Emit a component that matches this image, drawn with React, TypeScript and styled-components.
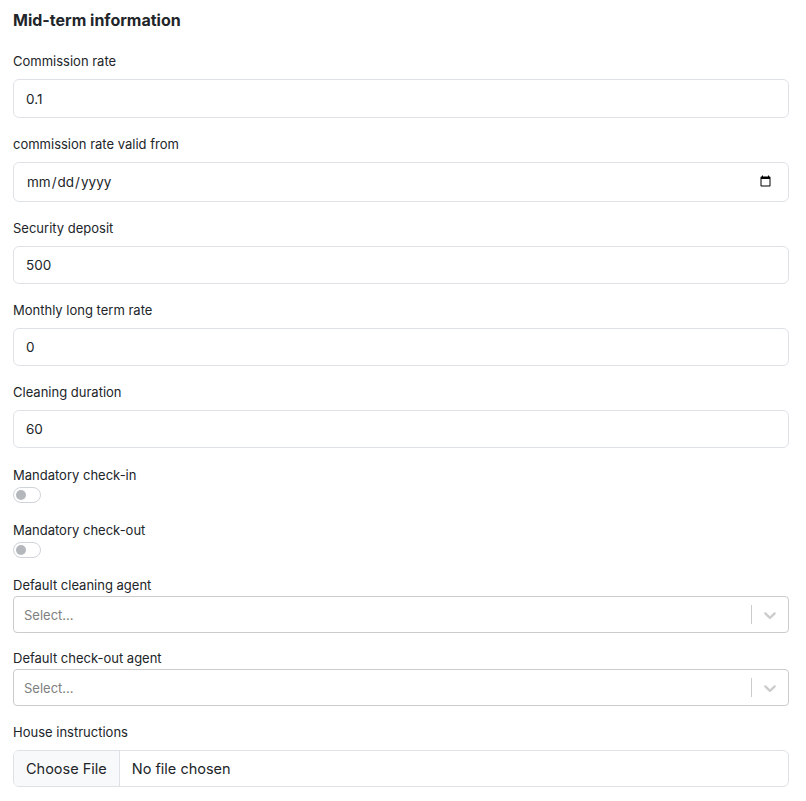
import React from 'react';
import styled, { createGlobalStyle } from 'styled-components';

const GlobalStyle = createGlobalStyle`
    body {
        margin: 0;
        background: #ffffff;
        font-family: Inter, 'Noto Sans', sans-serif;
        color: #212529;
    }
`;

const Form = styled.form`
    padding: 8px 17px 0 13px;
`;

const Title = styled.h5`
    margin: 0 0 19px;
    font-size: 16px;
    font-weight: 700;
    line-height: 24px;
    color: #212529;
`;

const Field = styled.div<{ gap?: number }>`
    margin-bottom: ${(p) => p.gap ?? 16}px;
`;

const Label = styled.label`
    display: block;
    font-size: 13px;
    line-height: 20px;
    margin-bottom: 8px;
`;

const ToggleLabel = styled(Label)`
    margin-bottom: 2px;
`;

const SelectLabel = styled(Label)`
    margin-bottom: 1px;
`;

const Input = styled.input<{ h?: number }>`
    display: block;
    box-sizing: border-box;
    width: 100%;
    height: ${(p) => p.h ?? 38}px;
    padding: 0 12px;
    font-family: inherit;
    font-size: 13.5px;
    color: #212529;
    background: #fff;
    border: 1px solid #dee2e6;
    border-radius: 6px;
    outline: none;

    &::-webkit-calendar-picker-indicator {
        margin-right: 2px;
    }
`;

const Switch = styled.span`
    display: block;
    box-sizing: border-box;
    width: 28px;
    height: 16px;
    border: 1px solid #ced4da;
    border-radius: 8px;
    position: relative;
    background: #fff;

    &::after {
        content: '';
        position: absolute;
        left: 2px;
        top: 2px;
        width: 10px;
        height: 10px;
        border-radius: 50%;
        background: #b4b8bc;
    }
`;

const SelectControl = styled.div`
    display: flex;
    align-items: center;
    box-sizing: border-box;
    height: 37px;
    border: 1px solid #cccccc;
    border-radius: 4px;
    background: #fff;
`;

const Placeholder = styled.div`
    flex: 1;
    padding: 0 10px;
    font-size: 13px;
    color: #808080;
`;

const Separator = styled.span`
    width: 1px;
    align-self: stretch;
    margin: 8px 0;
    background: #cccccc;
`;

const Indicator = styled.div`
    display: flex;
    padding: 8px;
    color: #cccccc;
`;

const FileInput = styled.input`
    display: block;
    box-sizing: border-box;
    width: 100%;
    height: 37px;
    padding: 0 12px 0 0;
    font-family: inherit;
    font-size: 14.5px;
    color: #212529;
    border: 1px solid #dee2e6;
    border-radius: 6px;
    overflow: hidden;

    &::file-selector-button {
        height: 100%;
        margin: 0 12px 0 0;
        padding: 0 12px;
        font-family: inherit;
        font-size: 14.5px;
        color: #212529;
        background: #f8f9fa;
        border: none;
        border-right: 1px solid #dee2e6;
        border-radius: 0;
    }
`;

const Chevron = () => (
    <svg width="20" height="20" viewBox="0 0 20 20" fill="currentColor">
        <path d="M4.516 7.548c0.436-0.446 1.043-0.481 1.576 0l3.908 3.747 3.908-3.747c0.533-0.481 1.141-0.446 1.574 0 0.436 0.445 0.408 1.197 0 1.615-0.406 0.418-4.695 4.502-4.695 4.502-0.217 0.223-0.502 0.335-0.787 0.335s-0.57-0.112-0.789-0.335c0 0-4.287-4.084-4.695-4.502s-0.436-1.17 0-1.615z" />
    </svg>
);

const numberFields = [
    { label: 'Security deposit', value: '500', gap: 16 },
    { label: 'Monthly long term rate', value: '0', gap: 16 },
    { label: 'Cleaning duration', value: '60', gap: 17 },
];

const selectFields = [
    { label: 'Default cleaning agent', gap: 15 },
    { label: 'Default check-out agent', gap: 16 },
];

const App: React.FC = () => {
    return (
        <>
            <GlobalStyle />
            <Form>
                <Title>Mid-term information</Title>
                <Field>
                    <Label>Commission rate</Label>
                    <Input type="text" h={39} defaultValue="0.1" />
                </Field>
                <Field>
                    <Label>commission rate valid from</Label>
                    <Input type="date" h={40} />
                </Field>
                {numberFields.map((f) => (
                    <Field key={f.label} gap={f.gap}>
                        <Label>{f.label}</Label>
                        <Input type="text" defaultValue={f.value} />
                    </Field>
                ))}
                {['Mandatory check-in', 'Mandatory check-out'].map((l) => (
                    <Field key={l} gap={17}>
                        <ToggleLabel>{l}</ToggleLabel>
                        <Switch />
                    </Field>
                ))}
                {selectFields.map((f) => (
                    <Field key={f.label} gap={f.gap}>
                        <SelectLabel>{f.label}</SelectLabel>
                        <SelectControl>
                            <Placeholder>Select...</Placeholder>
                            <Separator />
                            <Indicator>
                                <Chevron />
                            </Indicator>
                        </SelectControl>
                    </Field>
                ))}
                <Field>
                    <Label>House instructions</Label>
                    <FileInput type="file" />
                </Field>
            </Form>
        </>
    );
};

export default App;
